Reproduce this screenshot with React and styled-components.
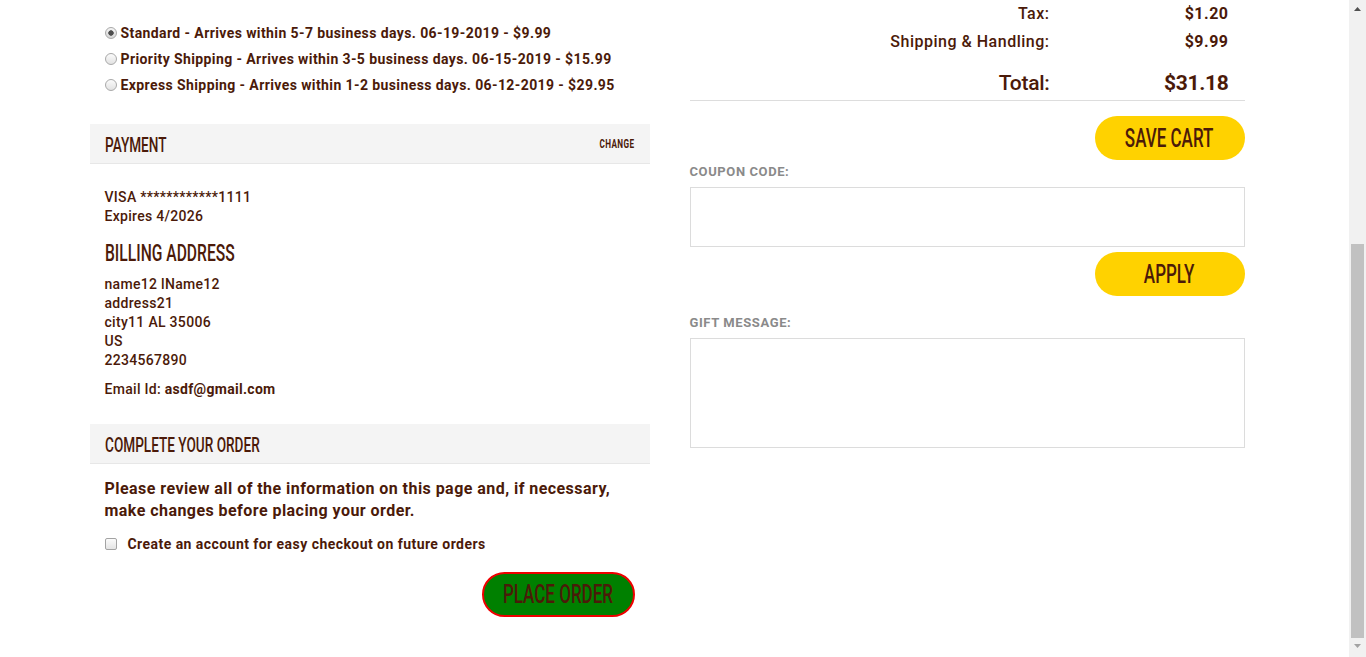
import React, { useLayoutEffect, useEffect } from 'react';
import styled, { createGlobalStyle } from 'styled-components';

const COLORS = {
  text: '#4b1a09',
  panel: '#f4f4f4',
  panelLine: '#e7e7e7',
  yellow: '#ffd200',
  label: '#8a8a8a',
  field: '#dcdcdc',
};

const GlobalStyle = createGlobalStyle`
  html {
    overflow-y: scroll;
    scrollbar-width: none;
  }
  html::-webkit-scrollbar {
    display: none;
  }
  body {
    margin: 0;
    padding-right: 17px;
    background: #fff;
    color: ${COLORS.text};
    font-family: Roboto, "Liberation Sans", sans-serif;
    font-weight: 500;
  }
`;

const shippingOptions = [
  { id: 'std', name: 'Standard', text: 'Arrives within 5-7 business days. 06-19-2019 - $9.99' },
  { id: 'pri', name: 'Priority Shipping', text: 'Arrives within 3-5 business days. 06-15-2019 - $15.99' },
  { id: 'exp', name: 'Express Shipping', text: 'Arrives within 1-2 business days. 06-12-2019 - $29.95' },
];

const cartItems = [
  { name: 'Classic Logo Tee', sku: 'Item #100245', qty: 1, price: '$12.00' },
  { name: 'Sticker Pack', sku: 'Item #100871', qty: 1, price: '$8.00' },
];

const Condensed = ({ children, origin = 'left' }) => (
  <Squeeze $origin={origin}>{children}</Squeeze>
);

// stands in for the browser's classic scrollbar, scrolled to the bottom
const FakeScrollbar = () => (
  <Rail>
    <RailArrow viewBox="0 0 7 4" $top>
      <path d="M0 4 L3.5 0 L7 4 Z" fill="#505050" />
    </RailArrow>
    <RailThumb />
    <RailArrow viewBox="0 0 7 4">
      <path d="M0 0 L7 0 L3.5 4 Z" fill="#a3a3a3" />
    </RailArrow>
  </Rail>
);

const App = () => {
  useLayoutEffect(() => {
    window.scrollTo(0, document.documentElement.scrollHeight);
  }, []);
  useEffect(() => {
    const t = setTimeout(() => window.scrollTo(0, document.documentElement.scrollHeight), 0);
    return () => clearTimeout(t);
  }, []);

  return (
    <>
      <GlobalStyle />
      <FakeScrollbar />
      <Container>
        <Breadcrumb>Home / Cart / Checkout</Breadcrumb>
        <PageTitle>
          <Condensed>CHECKOUT</Condensed>
        </PageTitle>

        <Columns>
          <LeftCol>
            <SectionHeader>
              <HeaderTitle><Condensed>SHIPPING ADDRESS</Condensed></HeaderTitle>
              <ChangeLink><Condensed origin="right">CHANGE</Condensed></ChangeLink>
            </SectionHeader>
            <SectionBody>
              <Line>name12 lName12</Line>
              <Line>address21</Line>
              <Line>city11 AL 35006</Line>
              <Line>US</Line>
              <Line>2234567890</Line>
              <EmailLine>Email Id: <strong>asdf@gmail.com</strong></EmailLine>
            </SectionBody>

            <SectionHeader $gap={16}>
              <HeaderTitle><Condensed>SHIPPING METHOD</Condensed></HeaderTitle>
            </SectionHeader>
            <RadioList>
              {shippingOptions.map((o, i) => (
                <RadioRow key={o.id}>
                  <Radio type="radio" name="ship" defaultChecked={i === 0} />
                  <span>{o.name} - {o.text}</span>
                </RadioRow>
              ))}
            </RadioList>

            <SectionHeader $gap={26}>
              <HeaderTitle><Condensed>PAYMENT</Condensed></HeaderTitle>
              <ChangeLink><Condensed origin="right">CHANGE</Condensed></ChangeLink>
            </SectionHeader>
            <SectionBody>
              <Line>VISA ************1111</Line>
              <Line>Expires 4/2026</Line>
              <SubTitle><Condensed>BILLING ADDRESS</Condensed></SubTitle>
              <Line>name12 lName12</Line>
              <Line>address21</Line>
              <Line>city11 AL 35006</Line>
              <Line>US</Line>
              <Line>2234567890</Line>
              <EmailLine>Email Id: <strong>asdf@gmail.com</strong></EmailLine>
            </SectionBody>

            <SectionHeader $gap={25}>
              <HeaderTitle><Condensed>COMPLETE YOUR ORDER</Condensed></HeaderTitle>
            </SectionHeader>
            <CompleteBody>
              <Review>
                Please review all of the information on this page and, if necessary,
                <br />
                make changes before placing your order.
              </Review>
              <CheckRow>
                <Check type="checkbox" />
                <span>Create an account for easy checkout on future orders</span>
              </CheckRow>
              <ButtonRow $gap={19}>
                <PlaceOrder type="button">
                  <Condensed origin="center">PLACE ORDER</Condensed>
                </PlaceOrder>
              </ButtonRow>
            </CompleteBody>
          </LeftCol>

          <RightCol>
            <SectionHeader>
              <HeaderTitle><Condensed>ORDER SUMMARY</Condensed></HeaderTitle>
            </SectionHeader>
            {cartItems.map((item) => (
              <ItemRow key={item.sku}>
                <div>
                  <ItemName>{item.name}</ItemName>
                  <Line>{item.sku}</Line>
                  <Line>Qty: {item.qty}</Line>
                </div>
                <ItemName>{item.price}</ItemName>
              </ItemRow>
            ))}
            <Summary>
              <SummaryRow>
                <SummaryLabel>Subtotal:</SummaryLabel>
                <SummaryValue>$20.00</SummaryValue>
              </SummaryRow>
              <SummaryRow>
                <SummaryLabel>Tax:</SummaryLabel>
                <SummaryValue>$1.20</SummaryValue>
              </SummaryRow>
              <SummaryRow>
                <SummaryLabel>Shipping &amp; Handling:</SummaryLabel>
                <SummaryValue>$9.99</SummaryValue>
              </SummaryRow>
              <SummaryRow $total>
                <SummaryLabel>Total:</SummaryLabel>
                <SummaryValue>$31.18</SummaryValue>
              </SummaryRow>
            </Summary>

            <ButtonRow $gap={15}>
              <YellowButton type="button">
                <Condensed origin="center">SAVE CART</Condensed>
              </YellowButton>
            </ButtonRow>

            <FieldLabel $gap={4}>COUPON CODE:</FieldLabel>
            <TextInput type="text" />
            <ButtonRow $gap={5}>
              <YellowButton type="button">
                <Condensed origin="center">APPLY</Condensed>
              </YellowButton>
            </ButtonRow>

            <FieldLabel $gap={19}>GIFT MESSAGE:</FieldLabel>
            <GiftArea />
          </RightCol>
        </Columns>
      </Container>
    </>
  );
};

export default App;

const Rail = styled.div`
  position: fixed;
  top: 0;
  right: 0;
  bottom: 0;
  width: 17px;
  z-index: 10;
  display: flex;
  flex-direction: column;
  align-items: center;
  background: #f1f1f1;
`;

const RailArrow = styled.svg`
  flex: none;
  width: 7px;
  height: 4px;
  margin: ${(p) => (p.$top ? '7px 0 6px' : '6px 0 9px')};
`;

const RailThumb = styled.div`
  flex: none;
  width: 13px;
  height: 394px;
  margin-top: auto;
  background: #c1c1c1;
`;

const Squeeze = styled.span`
  display: inline-block;
  white-space: nowrap;
  transform: scaleX(0.68);
  transform-origin: ${(p) => p.$origin};
`;

const Container = styled.div`
  width: 1170px;
  margin: 0 auto;
  padding-bottom: 40px;
`;

const Breadcrumb = styled.div`
  padding-top: 20px;
  font-size: 12px;
  line-height: 20px;
  color: ${COLORS.label};
`;

const PageTitle = styled.h1`
  margin: 0;
  padding: 30px 0 24px;
  font-weight: 500;
  font-size: 36px;
  line-height: 44px;
`;

const Columns = styled.div`
  display: flex;
  align-items: flex-start;
  gap: 40px;
`;

const LeftCol = styled.div`
  width: 560px;
`;

const RightCol = styled.div`
  width: 555px;
`;

const SectionHeader = styled.div`
  display: flex;
  align-items: center;
  justify-content: space-between;
  height: 39px;
  margin-top: ${(p) => (p.$gap ? `${p.$gap}px` : '0')};
  padding: 0 15px;
  background: ${COLORS.panel};
  border-bottom: 1px solid ${COLORS.panelLine};
`;

const HeaderTitle = styled.h3`
  margin: 0;
  font-weight: 500;
  font-size: 20px;
  line-height: 24px;
  padding-top: 2px;
`;

const ChangeLink = styled.a`
  font-size: 12px;
  font-weight: 700;
  letter-spacing: 0.6px;
  cursor: pointer;
`;

const SectionBody = styled.div`
  padding: 24px 15px 0;
`;

const Line = styled.div`
  font-size: 14px;
  line-height: 19px;
  letter-spacing: 0.3px;
`;

const EmailLine = styled(Line)`
  margin-top: 10px;
  strong {
    font-weight: 700;
  }
`;

const SubTitle = styled.h4`
  margin: 16px 0 9px;
  font-weight: 500;
  font-size: 23px;
  line-height: 24px;
`;

const RadioList = styled.div`
  padding: 22px 15px 0;
`;

const RadioRow = styled.label`
  display: flex;
  align-items: center;
  gap: 4px;
  height: 26px;
  font-size: 14px;
  font-weight: 700;
  letter-spacing: 0.4px;
`;

const Radio = styled.input`
  appearance: none;
  margin: 0;
  width: 12px;
  height: 12px;
  border-radius: 50%;
  border: 1px solid #a9a9a9;
  background: linear-gradient(#fbfbfb, #e2e2e2);
  box-sizing: border-box;
  &:checked {
    background: radial-gradient(circle, #4d4d4d 0 2.4px, transparent 3px),
      linear-gradient(#f4f4f4, #d6d6d6);
  }
`;

const CompleteBody = styled.div`
  padding: 14px 15px 0;
`;

const Review = styled.p`
  margin: 0;
  font-size: 16px;
  line-height: 22px;
  font-weight: 700;
  letter-spacing: 0.45px;
`;

const CheckRow = styled.label`
  display: flex;
  align-items: center;
  gap: 11px;
  margin-top: 12px;
  height: 19px;
  font-size: 14px;
  font-weight: 700;
  letter-spacing: 0.45px;
`;

const Check = styled.input`
  appearance: none;
  margin: 0;
  width: 12px;
  height: 12px;
  border-radius: 2px;
  border: 1px solid #a3a3a3;
  background: linear-gradient(#fbfbfb, #e4e4e4);
  box-sizing: border-box;
`;

const ButtonRow = styled.div`
  display: flex;
  justify-content: flex-end;
  margin-top: ${(p) => p.$gap}px;
`;

const PillButton = styled.button`
  display: flex;
  align-items: center;
  justify-content: center;
  border-radius: 24px;
  padding: 0;
  cursor: pointer;
  color: ${COLORS.text};
  font-family: Roboto, "Liberation Sans", sans-serif;
  font-size: 25px;
  font-weight: 500;
  line-height: 1;
`;

const PlaceOrder = styled(PillButton)`
  width: 153px;
  height: 45px;
  background: #008000;
  border: 2px solid #ee0000;
`;

const YellowButton = styled(PillButton)`
  width: 150px;
  height: 44px;
  border: none;
  background: ${COLORS.yellow};
`;

const ItemRow = styled.div`
  display: flex;
  justify-content: space-between;
  padding: 12px 16px 12px 15px;
  border-bottom: 1px solid ${COLORS.panelLine};
`;

const ItemName = styled.div`
  font-size: 14px;
  line-height: 19px;
  font-weight: 700;
`;

const Summary = styled.div`
  padding-top: 13px;
  padding-bottom: 3px;
  border-bottom: 1px solid #dddddd;
`;

const SummaryRow = styled.div`
  display: flex;
  align-items: center;
  height: 28px;
  padding-right: 16px;
  margin-top: ${(p) => (p.$total ? '14px' : '0')};
  font-size: ${(p) => (p.$total ? '21px' : '16px')};
  letter-spacing: ${(p) => (p.$total ? '-0.3px' : '0.5px')};
`;

const SummaryLabel = styled.div`
  flex: 1;
  text-align: right;
  font-weight: 500;
`;

const SummaryValue = styled.div`
  width: 179px;
  text-align: right;
  font-weight: 700;
`;

const FieldLabel = styled.label`
  display: block;
  margin-top: ${(p) => p.$gap}px;
  font-size: 13px;
  line-height: 16px;
  font-weight: 700;
  letter-spacing: 0.6px;
  color: ${COLORS.label};
`;

const TextInput = styled.input`
  display: block;
  box-sizing: border-box;
  width: 100%;
  height: 60px;
  margin-top: 7px;
  border: 1px solid ${COLORS.field};
  outline: none;
  padding: 0 12px;
  font-size: 16px;
`;

const GiftArea = styled.textarea`
  display: block;
  box-sizing: border-box;
  width: 100%;
  height: 110px;
  margin-top: 7px;
  border: 1px solid ${COLORS.field};
  outline: none;
  resize: none;
  font-size: 16px;
`;
